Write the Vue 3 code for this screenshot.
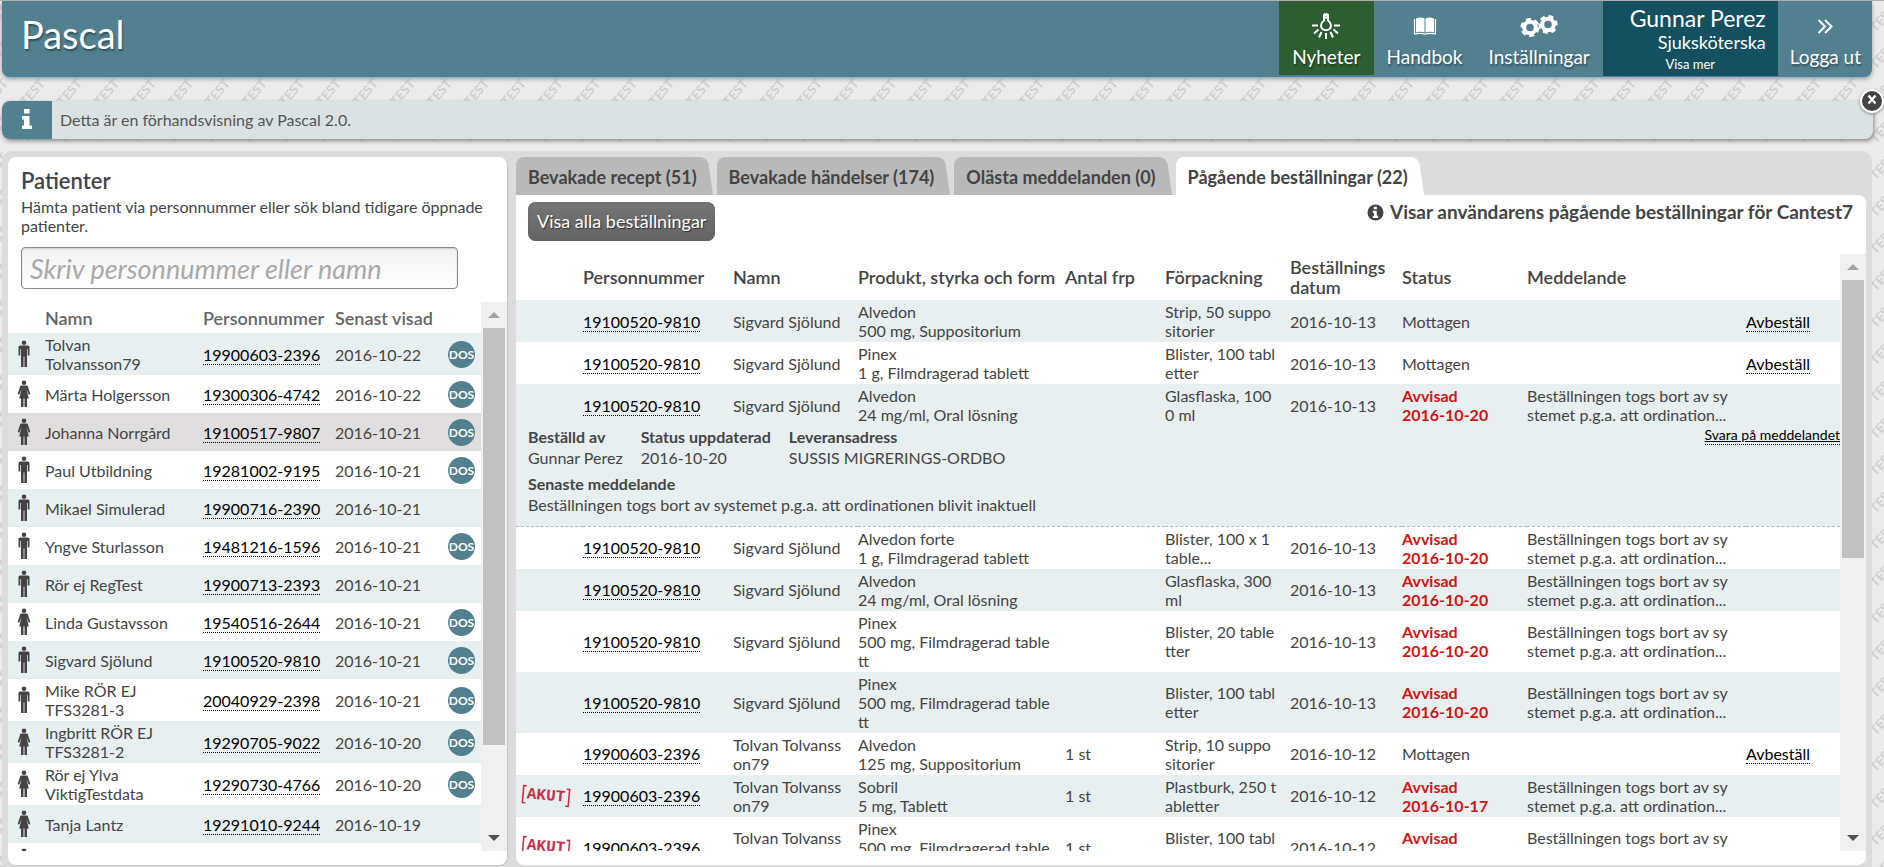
<script setup>
import { ref } from 'vue'

const query = ref('')

const patients = [
  { sex: 'm', name: 'Tolvan\nTolvansson79', pnr: '19900603-2396', seen: '2016-10-22', dos: true },
  { sex: 'f', name: 'Märta Holgersson', pnr: '19300306-4742', seen: '2016-10-22', dos: true },
  { sex: 'f', name: 'Johanna Norrgård', pnr: '19100517-9807', seen: '2016-10-21', dos: true, active: true },
  { sex: 'm', name: 'Paul Utbildning', pnr: '19281002-9195', seen: '2016-10-21', dos: true },
  { sex: 'm', name: 'Mikael Simulerad', pnr: '19900716-2390', seen: '2016-10-21' },
  { sex: 'm', name: 'Yngve Sturlasson', pnr: '19481216-1596', seen: '2016-10-21', dos: true },
  { sex: 'm', name: 'Rör ej RegTest', pnr: '19900713-2393', seen: '2016-10-21' },
  { sex: 'f', name: 'Linda Gustavsson', pnr: '19540516-2644', seen: '2016-10-21', dos: true },
  { sex: 'm', name: 'Sigvard Sjölund', pnr: '19100520-9810', seen: '2016-10-21', dos: true },
  { sex: 'm', name: 'Mike RÖR EJ\nTFS3281-3', pnr: '20040929-2398', seen: '2016-10-21', dos: true },
  { sex: 'f', name: 'Ingbritt RÖR EJ\nTFS3281-2', pnr: '19290705-9022', seen: '2016-10-20', dos: true },
  { sex: 'f', name: 'Rör ej Ylva\nViktigTestdata', pnr: '19290730-4766', seen: '2016-10-20', dos: true },
  { sex: 'f', name: 'Tanja Lantz', pnr: '19291010-9244', seen: '2016-10-19' },
  { sex: 'm', name: '', pnr: '', seen: '' },
]

const tabs = [
  { label: 'Bevakade recept (51)' },
  { label: 'Bevakade händelser (174)' },
  { label: 'Olästa meddelanden (0)' },
  { label: 'Pågående beställningar (22)', active: true },
]

const sigvard = { pnr: '19100520-9810', name: 'Sigvard Sjölund', date: '2016-10-13' }
const tolvan = { pnr: '19900603-2396', name: 'Tolvan Tolvanss\non79', date: '2016-10-12', count: '1 st' }
const message = 'Beställningen togs bort av sy\nstemet p.g.a. att ordination...'

const orders = [
  { ...sigvard, product: 'Alvedon\n500 mg, Suppositorium', pack: 'Strip, 50 suppo\nsitorier', status: 'Mottagen' },
  { ...sigvard, product: 'Pinex\n1 g, Filmdragerad tablett', pack: 'Blister, 100 tabl\netter', status: 'Mottagen' },
  { ...sigvard, product: 'Alvedon\n24 mg/ml, Oral lösning', pack: 'Glasflaska, 100\n0 ml', rejected: '2016-10-20', open: true },
  { ...sigvard, product: 'Alvedon forte\n1 g, Filmdragerad tablett', pack: 'Blister, 100 x 1\ntable...', rejected: '2016-10-20' },
  { ...sigvard, product: 'Alvedon\n24 mg/ml, Oral lösning', pack: 'Glasflaska, 300\nml', rejected: '2016-10-20' },
  { ...sigvard, product: 'Pinex\n500 mg, Filmdragerad table\ntt', pack: 'Blister, 20 table\ntter', rejected: '2016-10-20' },
  { ...sigvard, product: 'Pinex\n500 mg, Filmdragerad table\ntt', pack: 'Blister, 100 tabl\netter', rejected: '2016-10-20' },
  { ...tolvan, product: 'Alvedon\n125 mg, Suppositorium', pack: 'Strip, 10 suppo\nsitorier', status: 'Mottagen' },
  { ...tolvan, product: 'Sobril\n5 mg, Tablett', pack: 'Plastburk, 250 t\nabletter', rejected: '2016-10-17', urgent: true },
  { ...tolvan, product: 'Pinex\n500 mg, Filmdragerad table\ntt', pack: 'Blister, 100 tabl\netter', rejected: '2016-10-17', urgent: true },
]
</script>

<template>
  <div class="page">
    <svg class="watermark" aria-hidden="true">
      <defs>
        <pattern id="test-tile" x="13" y="75" width="37" height="37" patternUnits="userSpaceOnUse">
          <text class="tile-text" x="13" y="31" transform="rotate(-49 13 31)">TEST</text>
        </pattern>
      </defs>
      <rect width="100%" height="100%" fill="url(#test-tile)" />
    </svg>

    <header class="topbar">
      <h1 class="brand">Pascal</h1>
      <nav class="nav">
        <button type="button" class="nav-item news">
          <svg class="nav-icon" width="30" height="26" viewBox="0 0 30 26" fill="none" stroke="#fff" stroke-width="2">
            <path d="M13 2h4v5.500c2 1.500 3 3 3 4.700a5 5 0 0 1-10 0c0-1.700 1-3.200 3-4.700z" />
            <path d="M13 1.500h4M13 4.500h4" stroke-width="2.500" />
            <path d="M1 12.500h6M23 12.500h6M7.500 16.500L3 20.500M22.500 16.500l4.500 4M10.500 19l-2.500 5.500M19.500 19l2.500 5.500M15 20v6" />
          </svg>
          Nyheter
        </button>
        <button type="button" class="nav-item">
          <svg class="nav-icon" width="30" height="26" viewBox="0 0 30 26" fill="#fff">
            <path d="M6 5.500c3-1.500 6-1.500 8.500 0v14c-2.500-1-5.500-1-8.500 0z" />
            <path d="M24 5.500c-3-1.500-6-1.500-8.500 0v14c2.500-1 5.500-1 8.500 0z" />
            <path d="M4.500 6v15c4-.8 7.500-.8 10.500.2 3-1 6.500-1 10.500-.2V6" fill="none" stroke="#fff" stroke-width="1.200" />
          </svg>
          Handbok
        </button>
        <button type="button" class="nav-item">
          <svg class="nav-icon" width="38" height="26" viewBox="0 0 38 26" fill="none" stroke="#fff">
            <circle cx="10" cy="14.500" r="5.800" stroke-width="4" />
            <circle cx="10" cy="14.500" r="8" stroke-width="3.200" stroke-dasharray="4.800 3.577" />
            <circle cx="28" cy="11.500" r="5.800" stroke-width="4" />
            <circle cx="28" cy="11.500" r="8" stroke-width="3.200" stroke-dasharray="4.800 3.577" stroke-dashoffset="4" />
          </svg>
          Inställningar
        </button>
        <button type="button" class="user">
          <span class="user-name">Gunnar Perez</span>
          <span class="user-role">Sjuksköterska</span>
          <span class="user-more">Visa mer</span>
        </button>
        <button type="button" class="nav-item logout">
          <svg class="nav-icon" width="30" height="26" viewBox="0 0 30 26" fill="none" stroke="#fff" stroke-width="2">
            <path d="M8.500 7l6.500 6.500L8.500 20M15 7l6.500 6.500L15 20" />
          </svg>
          Logga ut
        </button>
      </nav>
    </header>

    <section class="notice">
      <span class="notice-icon">
        <svg width="12" height="22" viewBox="0 0 12 22" fill="#fff">
          <path d="M3 1h5.500v4.500H3zM1 8h7.500v9.500H11V21H1v-3.500h2v-6H1z" />
        </svg>
      </span>
      <p class="notice-text">Detta är en förhandsvisning av Pascal 2.0.</p>
      <button type="button" class="notice-close" aria-label="Stäng">
        <svg width="12" height="12" viewBox="0 0 12 12" fill="none" stroke="#fff" stroke-width="2.400">
          <path d="M2.500 1.500l7 8M9.500 1.500l-7 8" />
        </svg>
      </button>
    </section>

    <main class="main">
      <section class="card patients">
        <div class="search">
          <h2 class="title">Patienter</h2>
          <label class="hint" for="patient-search">Hämta patient via personnummer eller sök bland tidigare öppnade patienter.</label>
          <input id="patient-search" v-model="query" class="search-input" type="text" placeholder="Skriv personnummer eller namn" />
        </div>
        <div class="scroll">
          <div class="viewport">
            <table class="grid patient-grid">
              <colgroup>
                <col class="p-icon" /><col /><col class="p-pnr" /><col class="p-date" /><col class="p-dos" />
              </colgroup>
              <thead>
                <tr><th></th><th>Namn</th><th>Personnummer</th><th>Senast visad</th><th></th></tr>
              </thead>
              <tbody>
                <tr v-for="(p, i) in patients" :key="i" :class="{ odd: i % 2 === 0, active: p.active }">
                  <td class="person">
                    <svg v-if="p.sex === 'm'" class="figure" width="14" height="28" viewBox="0 0 14 28">
                      <circle cx="7" cy="2.800" r="2.300" />
                      <path d="M3 5.500h8a1.500 1.500 0 0 1 1.500 1.500v8.500h-1.800V9H10v18H7.400V16.500h-.8V27H4V9h-.7v6.500H1.500V7A1.500 1.500 0 0 1 3 5.500z" />
                    </svg>
                    <svg v-else class="figure" width="14" height="28" viewBox="0 0 14 28">
                      <circle cx="7" cy="2.800" r="2.300" />
                      <path d="M4.500 5.500h5c.8 0 1.300.5 1.500 1.200l2.300 7.300-1.500.8L9.500 9l2.300 9.500H10V27H7.500v-8.500h-1V27H4v-8.500H2.200L4.500 9l-2.300 5.800-1.500-.8L3 6.700c.2-.7.700-1.200 1.500-1.200z" />
                    </svg>
                  </td>
                  <td class="wrap">{{ p.name }}</td>
                  <td><a v-if="p.pnr" class="link" href="#">{{ p.pnr }}</a></td>
                  <td>{{ p.seen }}</td>
                  <td><span v-if="p.dos" class="dos">DOS</span></td>
                </tr>
              </tbody>
            </table>
          </div>
          <div class="scrollbar" aria-hidden="true">
            <i class="arrow up"></i>
            <div class="track"><div class="thumb thumb-patients"></div></div>
            <i class="arrow down"></i>
          </div>
        </div>
      </section>

      <section class="workspace">
        <div class="tabs" role="tablist">
          <button
            v-for="t in tabs"
            :key="t.label"
            type="button"
            role="tab"
            class="tab"
            :class="{ current: t.active }"
            :aria-selected="!!t.active"
          >
            <span class="tab-label">{{ t.label }}</span>
          </button>
        </div>
        <div class="card orders">
          <div class="toolbar">
            <button type="button" class="show-all">Visa alla beställningar</button>
            <p class="scope">
              <svg width="17" height="17" viewBox="0 0 17 17">
                <circle cx="8.500" cy="8.500" r="8" fill="#444" />
                <path d="M6.800 2.800h3v2.500h-3zM5.800 6.700h4v5h1.300v2.200H5.800v-2.200H7V8.900H5.800z" fill="#fff" />
              </svg>
              Visar användarens pågående beställningar för Cantest7
            </p>
          </div>
          <div class="scroll">
            <div class="viewport">
              <table class="grid order-grid">
                <colgroup>
                  <col class="o-flag" /><col class="o-pnr" /><col class="o-mid" /><col class="o-product" />
                  <col class="o-count" /><col class="o-mid" /><col class="o-date" /><col class="o-mid" /><col /><col class="o-action" />
                </colgroup>
                <thead>
                  <tr>
                    <th></th>
                    <th>Personnummer</th>
                    <th>Namn</th>
                    <th>Produkt, styrka och form</th>
                    <th>Antal frp</th>
                    <th>Förpackning</th>
                    <th class="wrap">Beställnings<br />datum</th>
                    <th>Status</th>
                    <th>Meddelande</th>
                    <th></th>
                  </tr>
                </thead>
                <tbody>
                  <template v-for="(o, i) in orders" :key="i">
                    <tr :class="{ odd: i % 2 === 0 }">
                      <td class="flag">
                        <svg v-if="o.urgent" class="urgent" width="50" height="24" viewBox="0 0 50 24">
                          <g transform="rotate(5 25 12)">
                            <path d="M5 3.500H2v17h3M45 3.500h3v17h-3" fill="none" stroke="#c8304c" stroke-width="1.600" />
                            <text x="25" y="16" text-anchor="middle" class="urgent-text">AKUT</text>
                          </g>
                        </svg>
                      </td>
                      <td><a class="link" href="#">{{ o.pnr }}</a></td>
                      <td class="wrap">{{ o.name }}</td>
                      <td class="wrap">{{ o.product }}</td>
                      <td>{{ o.count }}</td>
                      <td class="wrap">{{ o.pack }}</td>
                      <td>{{ o.date }}</td>
                      <td v-if="o.rejected" class="rejected">Avvisad<br />{{ o.rejected }}</td>
                      <td v-else>{{ o.status }}</td>
                      <td class="wrap">{{ o.rejected ? message : '' }}</td>
                      <td><a v-if="o.status" class="link" href="#">Avbeställ</a></td>
                    </tr>
                    <tr v-if="o.open" class="odd details">
                      <td colspan="10">
                        <div class="details-head">
                          <dl class="facts">
                            <div><dt>Beställd av</dt><dd>Gunnar Perez</dd></div>
                            <div><dt>Status uppdaterad</dt><dd>2016-10-20</dd></div>
                            <div><dt>Leveransadress</dt><dd>SUSSIS MIGRERINGS-ORDBO</dd></div>
                          </dl>
                          <a class="reply" href="#">Svara på meddelandet</a>
                        </div>
                        <dl class="facts latest">
                          <div>
                            <dt>Senaste meddelande</dt>
                            <dd>Beställningen togs bort av systemet p.g.a. att ordinationen blivit inaktuell</dd>
                          </div>
                        </dl>
                      </td>
                    </tr>
                  </template>
                </tbody>
              </table>
            </div>
            <div class="scrollbar" aria-hidden="true">
              <i class="arrow up"></i>
              <div class="track"><div class="thumb thumb-orders"></div></div>
              <i class="arrow down"></i>
            </div>
          </div>
        </div>
      </section>
    </main>
  </div>
</template>

<style>
body {
  margin: 0;
  background: #ebebeb;
}
</style>

<style scoped>
.page {
  position: relative;
  display: flex;
  flex-direction: column;
  box-sizing: border-box;
  height: 100vh;
  border-top: 1px solid #b0b0b0;
  overflow: hidden;
  font-family: Lato, "Liberation Sans", sans-serif;
  font-size: 16px;
  line-height: 19px;
  color: #444;
}
.page * {
  box-sizing: border-box;
}
button,
input {
  font-family: inherit;
}
button {
  border: 0;
  cursor: pointer;
}
.watermark {
  position: absolute;
  inset: 0;
  width: 100%;
  height: 100%;
}
.tile-text {
  font-family: Lato, "Liberation Sans", sans-serif;
  font-size: 13px;
  font-weight: 900;
  fill: #d0d0d0;
}

.topbar {
  position: relative;
  display: flex;
  justify-content: space-between;
  height: 76px;
  margin: 0 12px 0 2px;
  background: #52808f;
  border-bottom: 1px solid #3b86b5;
  border-radius: 0 0 8px 8px;
  box-shadow: 0 2px 4px #999;
  color: #fff;
  text-shadow: 1px 2px 2px rgba(0, 0, 0, 0.4);
}
.brand {
  margin: 0;
  padding: 10px 0 0 19px;
  font-size: 38px;
  line-height: 46px;
  font-weight: 400;
}
.nav {
  display: flex;
}
.nav-item {
  display: flex;
  flex-direction: column;
  align-items: center;
  padding: 12px 13px 0;
  background: none;
  color: #fff;
  font-size: 19px;
  line-height: 22px;
  text-shadow: inherit;
}
.nav-icon {
  margin-bottom: 7px;
}
.news {
  height: 74px;
  background: #2d5e32;
}
.logout {
  padding-right: 11px;
  padding-left: 12px;
}
.user {
  display: flex;
  flex-direction: column;
  align-items: flex-end;
  width: 175px;
  height: 75px;
  padding: 3px 12px 0;
  background: #14505f;
  color: #fff;
}
.user-name {
  font-size: 23px;
  line-height: 28px;
}
.user-role {
  font-size: 18px;
  line-height: 21px;
}
.user-more {
  align-self: center;
  font-size: 13px;
  line-height: 22px;
}

.notice {
  position: relative;
  display: flex;
  align-items: center;
  height: 38px;
  margin: 24px 11px 0 2px;
  background: #dae2e4;
  border-radius: 8px;
  box-shadow: 1px 2px 4px #888;
}
.notice-icon {
  display: flex;
  align-items: center;
  justify-content: center;
  width: 50px;
  height: 38px;
  padding-bottom: 3px;
  background: #52808f;
  border-radius: 8px 0 0 8px;
}
.notice-text {
  margin: 0;
  padding: 0 0 2px 8px;
  color: #555;
}
.notice-close {
  position: absolute;
  top: -12px;
  right: -11px;
  display: flex;
  justify-content: center;
  width: 24px;
  height: 24px;
  padding: 3px 0 0;
  background: #444;
  border: 2px solid #fff;
  border-radius: 50%;
  box-shadow: 0 1px 3px #888;
}

.main {
  position: relative;
  display: flex;
  flex: 1;
  gap: 9px;
  min-height: 0;
  margin: 12px 12px 0 2px;
  padding: 6px 6px 2px;
  background: #dcdcdc;
  border-radius: 10px 10px 0 0;
}
.card {
  display: flex;
  flex-direction: column;
  min-height: 0;
  padding-bottom: 14px;
  background: #fff;
  border-radius: 8px;
}
.patients {
  flex: 0 0 499px;
  box-shadow: 1px 1px 1px #c4c4c4;
}
.search {
  padding: 12px 13px 13px;
}
.title {
  margin: 0 0 4px;
  font-size: 22px;
  line-height: 24px;
  font-weight: 600;
}
.hint {
  display: block;
}
.search-input {
  display: block;
  width: 437px;
  height: 42px;
  margin-top: 12px;
  padding: 0 8px;
  border: 1px solid #888;
  border-radius: 4px;
  background: linear-gradient(#f3f3f3, #fff);
  box-shadow: inset 0 1px 2px #ccc;
  color: #444;
  font-size: 27px;
}
.search-input::placeholder {
  color: #a9a9a9;
  font-style: italic;
}

.scroll {
  display: flex;
  flex: 1;
  min-height: 0;
}
.viewport {
  flex: 1;
  min-width: 0;
  overflow: hidden;
}
.scrollbar {
  display: flex;
  flex-direction: column;
  flex: 0 0 26px;
  padding: 10px 2px;
  background: #f0f0f0;
}
.arrow {
  align-self: center;
  border: 6px solid transparent;
}
.up {
  border-top: 0;
  border-bottom-color: #a3a3a3;
}
.down {
  border-bottom: 0;
  border-top-color: #505050;
}
.track {
  flex: 1;
  margin: 10px 0;
}
.thumb {
  background: #c1c1c1;
}
.thumb-patients {
  height: 84%;
}
.thumb-orders {
  height: 51%;
}

.grid {
  width: 100%;
  table-layout: fixed;
  border-collapse: collapse;
}
.grid th,
.grid td {
  padding: 2px 0;
  text-align: left;
  white-space: nowrap;
}
.grid .wrap {
  white-space: pre-line;
}
.grid th {
  font-size: 18px;
  line-height: 20px;
  font-weight: 600;
}
.odd {
  background: #e7eff1;
}
.patient-grid th {
  height: 31px;
  color: #666;
}
.patient-grid td {
  height: 38px;
}
.patient-grid .active {
  background: #e0dedf;
}
.p-icon { width: 37px; }
.p-pnr { width: 132px; }
.p-date { width: 113px; }
.p-dos { width: 33px; }
.grid .person {
  padding-left: 9px;
}
.figure {
  display: block;
  fill: #444;
}
.dos {
  display: block;
  width: 27px;
  height: 27px;
  border-radius: 50%;
  background: #52808f;
  color: #fff;
  font-size: 12px;
  line-height: 27px;
  font-weight: 700;
  text-align: center;
}
.link {
  border-bottom: 1px dotted #000;
  color: #000;
  text-decoration: none;
}

.workspace {
  display: flex;
  flex: 1;
  flex-direction: column;
  min-width: 0;
}
.tabs {
  display: flex;
  gap: 4px;
}
.tab {
  position: relative;
  height: 38px;
  padding: 2px 16px 0 12px;
  background: none;
  color: #444;
  font-size: 18px;
  font-weight: 700;
}
.tab::before,
.tab::after {
  content: "";
  position: absolute;
  top: 0;
  bottom: 0;
  background: #b9b9b9;
}
.tab::before {
  left: 0;
  right: 16px;
  border-radius: 8px 0 0 0;
}
.tab::after {
  right: 0;
  width: 24px;
  border-radius: 0 8px 0 0;
  transform: skewX(8deg);
  transform-origin: bottom;
}
.current::before,
.current::after {
  background: #fff;
}
.tab-label {
  position: relative;
  z-index: 1;
}
.orders {
  flex: 1;
  border-radius: 0 8px 8px 8px;
}
.toolbar {
  display: flex;
  justify-content: space-between;
  align-items: flex-start;
  padding: 7px 13px 13px 12px;
}
.show-all {
  height: 39px;
  padding: 0 9px 2px;
  border-radius: 8px;
  background: linear-gradient(#767676, #636363);
  box-shadow: inset 0 0 1px #333;
  color: #fff;
  font-size: 18px;
  text-shadow: 1px 1px 1px #333;
}
.scope {
  display: flex;
  align-items: center;
  gap: 6px;
  margin: 0;
  font-size: 19px;
  line-height: 20px;
  font-weight: 700;
}
.order-grid th {
  height: 46px;
}
.order-grid td {
  height: 42px;
}
.o-flag { width: 67px; }
.o-pnr { width: 150px; }
.o-mid { width: 125px; }
.o-product { width: 207px; }
.o-count { width: 100px; }
.o-date { width: 112px; }
.o-action { width: 94px; }
.grid .flag {
  padding-left: 5px;
}
.urgent {
  display: block;
}
.urgent-text {
  fill: #c8304c;
  font-family: "Liberation Mono", monospace;
  font-size: 16px;
  font-weight: 700;
}
.rejected {
  color: #d11313;
  font-weight: 700;
}
.grid .details td {
  height: 100px;
  padding: 0 0 8px 12px;
  border-bottom: 1px dashed #a5bfc9;
  vertical-align: top;
}
.details-head {
  display: flex;
  justify-content: space-between;
  align-items: flex-start;
}
.facts {
  display: flex;
  gap: 18px;
  margin: 0;
  line-height: 21px;
}
.facts dt {
  font-size: 16px;
  font-weight: 700;
}
.facts dd {
  margin: 0;
}
.latest {
  margin-top: 5px;
}
.reply {
  border-bottom: 1px dotted #000;
  color: #000;
  font-size: 14px;
  line-height: 18px;
}
</style>
